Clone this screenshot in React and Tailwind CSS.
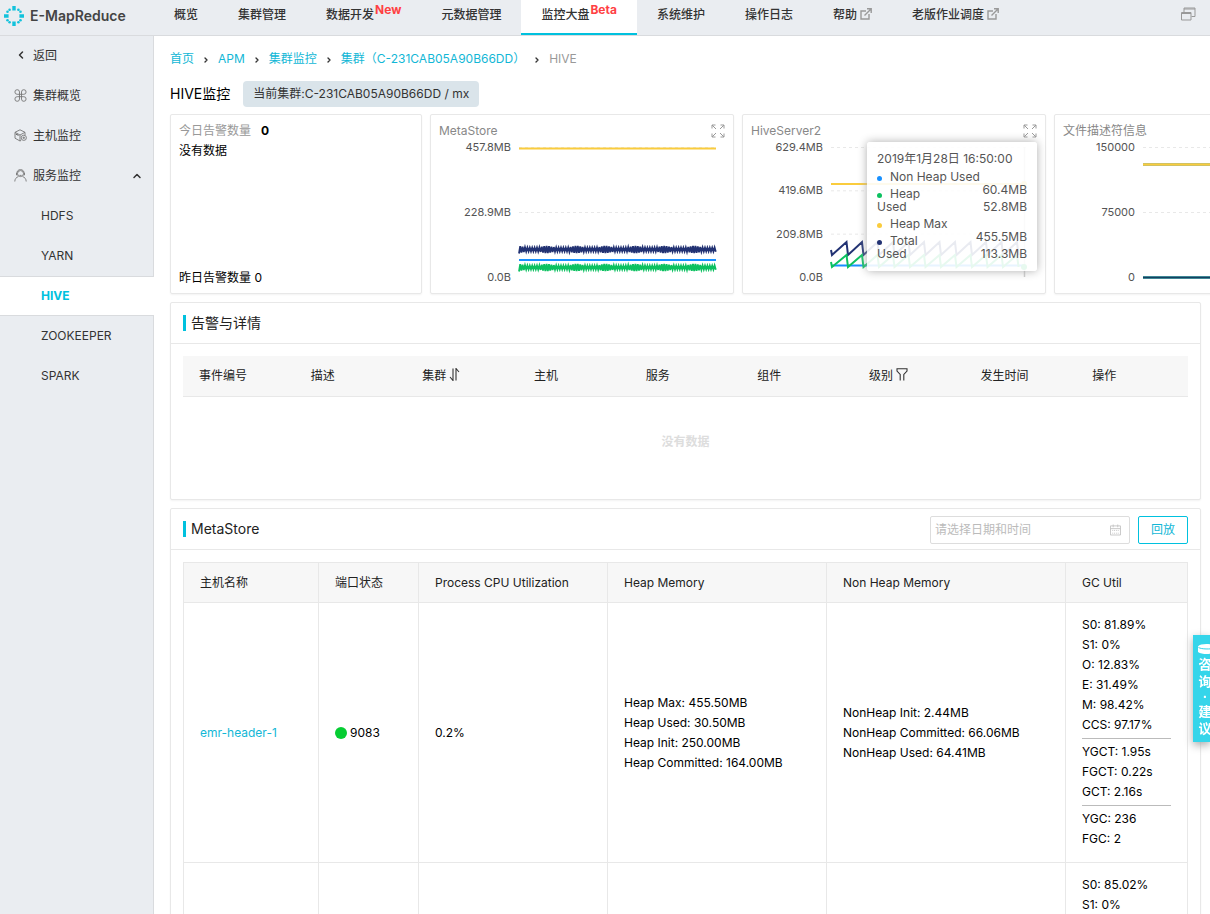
import React, { useState } from "react";
import { ChevronLeft, ChevronRight, ChevronUp } from "lucide-react";

const GREEN = "#0cc160";
const NAVY = "#223273";
const BLUE = "#1890ff";
const YELLOW = "#facc3d";

const navItems = [
  { label: "概览" },
  { label: "集群管理" },
  { label: "数据开发", tag: "New" },
  { label: "元数据管理" },
  { label: "监控大盘", tag: "Beta", active: true },
  { label: "系统维护" },
  { label: "操作日志" },
  { label: "帮助", external: true },
  { label: "老版作业调度", external: true },
];

const services = ["HDFS", "YARN", "HIVE", "ZOOKEEPER", "SPARK"];

const crumbs = ["首页", "APM", "集群监控", "集群（C-231CAB05A90B66DD）"];

const hosts = [
  {
    id: 1,
    name: "emr-header-1",
    port: "9083",
    cpu: "0.2%",
    heap: ["Heap Max: 455.50MB", "Heap Used: 30.50MB", "Heap Init: 250.00MB", "Heap Committed: 164.00MB"],
    nonHeap: ["NonHeap Init: 2.44MB", "NonHeap Committed: 66.06MB", "NonHeap Used: 64.41MB"],
    gc: [
      ["S0: 81.89%", "S1: 0%", "O: 12.83%", "E: 31.49%", "M: 98.42%", "CCS: 97.17%"],
      ["YGCT: 1.95s", "FGCT: 0.22s", "GCT: 2.16s"],
      ["YGC: 236", "FGC: 2"],
    ],
  },
  {
    id: 2,
    heap: [],
    nonHeap: [],
    gc: [["S0: 85.02%", "S1: 0%"]],
  },
];

/* ---------- icons ---------- */

const Logo = () => (
  <svg width="20" height="20" viewBox="0 0 20 20" fill="#12c2dc" aria-hidden="true">
    <path d="M8.300 0h3.400v4.600H8.300zM8.300 15.400h3.400V20H8.300zM0 8.300h4.600v3.400H0zM15.400 8.300H20v3.400h-4.600z" />
    <circle cx="5.600" cy="3.700" r="1.300" />
    <circle cx="14.400" cy="3.700" r="1.300" />
    <circle cx="5.600" cy="16.300" r="1.300" />
    <circle cx="14.400" cy="16.300" r="1.300" />
    <circle cx="3.500" cy="5.800" r="1.300" />
    <circle cx="16.500" cy="5.800" r="1.300" />
    <circle cx="3.500" cy="14.200" r="1.300" />
    <circle cx="16.500" cy="14.200" r="1.300" />
  </svg>
);

const ExternalIcon = () => (
  <svg width="12" height="12" viewBox="0 0 12 12" fill="none" stroke="#999" strokeWidth="1.400" aria-hidden="true">
    <path d="M6 3H1v8h8V6M4.500 7.500L10.500 1.500M7 .8h4.200V5" />
  </svg>
);

const WindowsIcon = () => (
  <svg width="15" height="14" viewBox="0 0 15 14" fill="none" stroke="#999" aria-hidden="true">
    <path d="M3 6V1h11v8.500h-3.500M3 2h11" />
    <path d="M.5 5.500h9.500v7.500H.5zM.5 6.500h9.500" />
  </svg>
);

const CloverIcon = () => (
  <svg width="13" height="13" viewBox="0 0 13 13" fill="none" stroke="#777" strokeWidth=".9" aria-hidden="true">
    <path d="M5.300 5.300H3.200a2.300 2.300 0 1 1 2.300-2.300v7a2.300 2.300 0 1 1-2.300-2.300h6.600A2.300 2.300 0 1 1 7.500 10V3a2.300 2.300 0 1 1 2.300 2.300z" />
  </svg>
);

const HostIcon = () => (
  <svg width="13" height="13" viewBox="0 0 13 13" fill="none" stroke="#777" strokeWidth=".9" aria-hidden="true">
    <path d="M6 .8L1 3.300v5.900l5 2.800 1.200-.6M1 3.300L6 6l5-2.700L6 .8M6 6v6M11 3.300V6" />
    <path stroke="#444" d="M1.800 5l2.700 1.400" />
    <circle cx="9.800" cy="8.800" r="2.600" />
    <path d="M9.800 7.500v2.600M8.500 8.800h2.600" />
  </svg>
);

const ServiceIcon = () => (
  <svg width="13" height="13" viewBox="0 0 13 13" fill="none" stroke="#777" strokeWidth=".9" aria-hidden="true">
    <circle cx="6.500" cy="4.600" r="3" />
    <path d="M2.800 4.800C2.600 2.200 4.300.6 6.500.6s3.900 1.600 3.700 4.200M2.500 4v2h1M10.500 4v2h-1M.8 12.500c0-2.500 1.500-4.300 3.600-4.900M12.200 12.500c0-2.500-1.500-4.300-3.600-4.900M5.500 6.400h2" />
  </svg>
);

const ExpandIcon = () => (
  <svg width="14" height="14" viewBox="0 0 14 14" fill="none" stroke="#999" aria-hidden="true">
    <path d="M1 4.500V1h3.500M1 1l4 4M9.500 1H13v3.500M13 1L9 5M1 9.500V13h3.500M1 13l4-4M9.500 13H13V9.500M13 13L9 9" />
  </svg>
);

const SortIcon = () => (
  <svg width="11" height="13" viewBox="0 0 11 13" fill="none" stroke="#333" strokeWidth="1.100" aria-hidden="true">
    <path d="M4 .5v12L1 9M7 12.500V.5L10 4" />
  </svg>
);

const FilterIcon = () => (
  <svg width="12" height="13" viewBox="0 0 12 13" fill="none" stroke="#333" strokeWidth="1.100" aria-hidden="true">
    <path d="M4.200 12.500V6.500L1 3V.7h10V3L7.800 6.500v6" />
  </svg>
);

const CalendarIcon = () => (
  <svg width="12" height="12" viewBox="0 0 12 12" fill="none" stroke="#c4c4c4" aria-hidden="true">
    <path d="M.5 1.500h11v10H.5zM.5 4.500h11M3.500 0v3M8.500 0v3" />
    <path strokeDasharray="1 1" d="M2.500 6.500h7M2.500 9.500h7" />
  </svg>
);

/* ---------- charts ---------- */

// high-frequency zigzag whose height swells every ~29px
const ripple = (mid) => {
  const pts = [`0,${mid + 4}`];
  for (let i = 1; i < 165; i++) {
    const x = i * 1.2;
    const swell = Math.pow(Math.cos((Math.PI * (x - 28)) / 29.4), 4);
    const amp = 1.8 + 1.8 * swell;
    pts.push(`${x.toFixed(1)},${(mid + (i % 2 ? -amp : amp)).toFixed(1)}`);
  }
  return pts.join(" ");
};

const sawtooth = (top, bottom) => {
  const pts = [`0,${bottom - 5}`, `1,${bottom}`];
  for (let x = 1; x < 185; x += 15.5) {
    pts.push(`${x + 14.5},${top}`, `${x + 16},${bottom}`);
  }
  return pts.join(" ");
};

const GridLine = ({ y }) => <line x1="0" x2="197" y1={y} y2={y} stroke="#e8e8e8" strokeDasharray="3 3" />;

const Chart = ({ ticks, children }) => (
  <div className="flex h-36 gap-2">
    <div className="flex w-20 flex-col justify-between text-right text-[11px] leading-[14px] text-[#545454]">
      {ticks.map((t) => (
        <span key={t}>{t}</span>
      ))}
    </div>
    <svg className="h-36 w-[198px] overflow-visible" viewBox="0 0 198 144" fill="none">
      {ticks.slice(0, -1).map((t, i) => (
        <GridLine key={t} y={7.5 + (130 * i) / (ticks.length - 1)} />
      ))}
      {children}
    </svg>
  </div>
);

const ChartCard = ({ title, ticks, children, overlay }) => (
  <section className="relative h-[180px] w-[304px] shrink-0 rounded-xs border border-[#e8e8e8] bg-white pt-[6px] shadow-xs">
    <div className="flex h-[19px] items-center justify-between px-2">
      <h2 className="text-xs leading-[19px] text-[#888]">{title}</h2>
      <button type="button" aria-label={`${title} 全屏`}>
        <ExpandIcon />
      </button>
    </div>
    <Chart ticks={ticks}>{children}</Chart>
    {overlay}
  </section>
);

const TipLabel = ({ dot, children }) => (
  <div className="flex items-center gap-2 leading-[17px]">
    <span className={`mt-1 size-[5px] shrink-0 rounded-full ${dot}`} />
    {children}
  </div>
);

const ChartTooltip = () => (
  <div className="absolute top-[27px] left-[124px] w-[170px] rounded-[3px] bg-white/90 px-[10px] pt-2 pb-[9px] text-xs text-[#555] shadow-[0_0_10px_#aeaeae]">
    <div className="pb-px leading-[17px] whitespace-nowrap">2019年1月28日 16:50:00</div>
    <div className="flex justify-between">
      <div className="w-16 whitespace-nowrap">
        <TipLabel dot="bg-[#1890ff]">Non Heap Used</TipLabel>
        <TipLabel dot="bg-[#0cc160]">Heap</TipLabel>
        <div className="-mt-0.5 pb-0.5 leading-[13px]">Used</div>
        <TipLabel dot="bg-[#facc3d]">Heap Max</TipLabel>
        <TipLabel dot="bg-[#223273]">Total</TipLabel>
        <div className="-mt-0.5 leading-[13px]">Used</div>
      </div>
      <div className="flex flex-col gap-[13px] pt-[13px] text-right leading-[17px]">
        <div>
          <div>60.4MB</div>
          <div>52.8MB</div>
        </div>
        <div>
          <div>455.5MB</div>
          <div>113.3MB</div>
        </div>
      </div>
    </div>
  </div>
);

/* ---------- page parts ---------- */

const Header = () => (
  <header className="flex h-9 shrink-0 items-start border-b border-[#d9dbde] bg-[#eaedf1]">
    <a href="#home" className="flex h-8 w-[154px] shrink-0 items-center gap-[6px] pl-1 text-sm font-semibold text-[#444]">
      <Logo />
      E-MapReduce
    </a>
    <nav className="flex">
      {navItems.map((item) => (
        <a
          key={item.label}
          href="#nav"
          className={`flex h-[35px] items-start px-5 text-xs leading-[30px] font-medium whitespace-nowrap text-[#333] ${
            item.active ? "border-b-2 border-[#00c1de] bg-white" : ""
          }`}
        >
          {item.label}
          {item.tag && <sup className="top-0 pl-px text-xs leading-5 font-bold text-[#ff4043]">{item.tag}</sup>}
          {item.external && (
            <span className="pt-2 pl-[3px]">
              <ExternalIcon />
            </span>
          )}
        </a>
      ))}
    </nav>
    <button type="button" aria-label="窗口" className="mt-[7px] mr-[14px] ml-auto">
      <WindowsIcon />
    </button>
  </header>
);

const SideItem = ({ icon, children }) => (
  <a href="#side" className="flex h-10 items-center gap-[6px] pl-[14px]">
    <span className="flex w-[13px] justify-center pb-0.5">{icon}</span>
    {children}
  </a>
);

const Sidebar = () => (
  <aside className="w-[154px] shrink-0 border-r border-[#d9dbde] bg-[#eaedf1] text-xs text-[#333]">
    <SideItem icon={<ChevronLeft size={12} strokeWidth={3} />}>返回</SideItem>
    <SideItem icon={<CloverIcon />}>集群概览</SideItem>
    <SideItem icon={<HostIcon />}>主机监控</SideItem>
    <div className="flex items-center justify-between pr-[10px]">
      <SideItem icon={<ServiceIcon />}>服务监控</SideItem>
      <ChevronUp size={12} strokeWidth={3} />
    </div>
    {services.map((name) =>
      name === "HIVE" ? (
        <a
          key={name}
          href="#hive"
          className="-mr-px flex h-10 items-center border-y border-[#d9dbde] bg-white pl-[41px] font-bold text-[#00c1de]"
        >
          {name}
        </a>
      ) : (
        <a key={name} href="#service" className="flex h-10 items-center pl-[41px]">
          {name}
        </a>
      )
    )}
  </aside>
);

const Breadcrumb = () => (
  <nav className="flex h-[21px] items-center gap-2 text-xs whitespace-nowrap">
    {crumbs.map((c) => (
      <React.Fragment key={c}>
        <a href="#crumb" className="text-[#12b7d6]">
          {c}
        </a>
        <ChevronRight size={8} strokeWidth={4} className="mt-0.5 text-[#333]" />
      </React.Fragment>
    ))}
    <span className="text-[#999]">HIVE</span>
  </nav>
);

const Panel = ({ title, actions, children }) => (
  <section className="mt-2 rounded-xs border border-[#e8e8e8] bg-white shadow-xs">
    <div className="flex h-[41px] items-center border-b border-[#e8e8e8] px-3">
      <h2 className="flex grow items-center gap-[5px] text-sm text-[#222]">
        <span className="h-4 w-[3px] bg-[#00c1de]" />
        {title}
      </h2>
      {actions}
    </div>
    <div className="p-3">{children}</div>
  </section>
);

const alertCols = ["事件编号", "描述", "集群", "主机", "服务", "组件", "级别", "发生时间", "操作"];

const AlertTable = () => (
  <table className="w-full table-fixed text-left text-xs">
    <thead>
      <tr className="h-10 border-b border-[#e8e8e8] bg-[#f7f7f7] text-[#222]">
        {alertCols.map((c) => (
          <th key={c} className="pl-4 font-normal">
            <span className="flex items-start gap-[3px]">
              {c}
              {c === "集群" && <SortIcon />}
              {c === "级别" && <FilterIcon />}
            </span>
          </th>
        ))}
      </tr>
    </thead>
    <tbody>
      <tr>
        <td colSpan={9} className="h-[91px] text-center font-bold text-[#ddd]">
          没有数据
        </td>
      </tr>
    </tbody>
  </table>
);

const hostCols = [
  ["主机名称", "w-[135px]"],
  ["端口状态", "w-[100px]"],
  ["Process CPU Utilization", "w-[189px]"],
  ["Heap Memory", "w-[219px]"],
  ["Non Heap Memory", "w-[239px]"],
  ["GC Util", ""],
];

const HostTable = () => (
  <table className="w-full table-fixed border-collapse text-left text-xs leading-5">
    <thead>
      <tr className="h-10 bg-[#f7f7f7] text-[#222]">
        {hostCols.map(([label, width]) => (
          <th key={label} className={`border border-[#e8e8e8] px-4 font-normal ${width}`}>
            {label}
          </th>
        ))}
      </tr>
    </thead>
    <tbody className="text-black">
      {hosts.map((h) => (
        <tr key={h.id}>
          <td className="border border-[#e8e8e8] px-4">
            {h.name && (
              <a href="#host" className="text-[#12b7d6]">
                {h.name}
              </a>
            )}
          </td>
          <td className="border border-[#e8e8e8] px-4">
            {h.port && (
              <span className="flex items-center gap-[3px]">
                <span className="size-3 rounded-full bg-[#06cd33]" />
                {h.port}
              </span>
            )}
          </td>
          <td className="border border-[#e8e8e8] px-4">{h.cpu}</td>
          <td className="border border-[#e8e8e8] px-4">
            {h.heap.map((line) => (
              <div key={line}>{line}</div>
            ))}
          </td>
          <td className="border border-[#e8e8e8] px-4">
            {h.nonHeap.map((line) => (
              <div key={line}>{line}</div>
            ))}
          </td>
          <td className="border border-[#e8e8e8] px-4 pt-3 pb-[13px]">
            {h.gc.map((group, i) => (
              <React.Fragment key={group[0]}>
                {i > 0 && <hr className="my-[3px] border-[#bbb]" />}
                {group.map((line) => (
                  <div key={line}>{line}</div>
                ))}
              </React.Fragment>
            ))}
          </td>
        </tr>
      ))}
    </tbody>
  </table>
);

const FeedbackTab = () => (
  <button
    type="button"
    aria-label="咨询·建议"
    className="fixed top-[635px] right-0 h-[107px] w-[17px] overflow-hidden bg-[#35d5ea] shadow-[0_3px_8px_#aaa]"
  >
    <span className="flex w-6 flex-col items-center pt-[3px] text-[13px] font-bold text-white">
      <svg width="17" height="13" viewBox="0 0 17 13" fill="none" aria-hidden="true">
        <path fill="#fff" d="M1 3.500C3 .5 12 .5 16.500 2v8c-4 1.500-12 1.500-15.500-1z" />
        <path stroke="#35d5ea" d="M1.500 4.500c3 1.800 12 1.800 15.500.8" />
      </svg>
      <span className="leading-[17px]">咨</span>
      <span className="leading-[17px]">询</span>
      <span className="leading-[13px]">·</span>
      <span className="leading-[17px]">建</span>
      <span className="leading-[17px]">议</span>
    </span>
  </button>
);

export default function App() {
  const [date, setDate] = useState("");

  return (
    <div className="flex h-screen flex-col overflow-hidden bg-white [font-family:Inter,'Noto_Sans_CJK_SC',sans-serif]">
      <Header />
      <div className="flex min-h-0 grow">
        <Sidebar />
        <main className="min-w-0 grow overflow-x-hidden overflow-y-auto pt-3 pr-[9px] pb-4 pl-4 [scrollbar-width:none]">
          <Breadcrumb />
          <div className="mt-3 flex items-center gap-[13px]">
            <h1 className="text-sm text-black">HIVE监控</h1>
            <span className="rounded bg-[#dae4ea] px-[10px] text-xs leading-[26px] text-[#333]">
              当前集群:C-231CAB05A90B66DD / mx
            </span>
          </div>

          <div className="mt-[7px] flex gap-2">
            <section className="flex h-[180px] w-[252px] shrink-0 flex-col rounded-xs border border-[#e8e8e8] px-2 pt-[6px] pb-[5px] text-xs leading-5 text-black shadow-xs">
              <div className="flex gap-[10px]">
                <span className="text-[#999]">今日告警数量</span>
                <b>0</b>
              </div>
              <div>没有数据</div>
              <div className="mt-auto">昨日告警数量 0</div>
            </section>

            <ChartCard title="MetaStore" ticks={["457.8MB", "228.9MB", "0.0B"]}>
              <path d="M0 8.500h197" stroke={YELLOW} strokeWidth="2" />
              <polyline points={ripple(109.5)} stroke={NAVY} strokeWidth="1.8" />
              <path d="M0 120h197" stroke={BLUE} strokeWidth="2" />
              <polyline points={ripple(127.5)} stroke={GREEN} strokeWidth="1.8" />
            </ChartCard>

            <ChartCard
              title="HiveServer2"
              ticks={["629.4MB", "419.6MB", "209.8MB", "0.0B"]}
              overlay={<ChartTooltip />}
            >
              <path d="M193.500 7v130" stroke="#ccc" strokeWidth="1.500" />
              <path d="M0 44h193" stroke={YELLOW} strokeWidth="2" />
              <path d="M0 125.500h193" stroke={BLUE} strokeWidth="2" />
              <polyline points={sawtooth(102, 115)} stroke={NAVY} strokeWidth="2" />
              <polyline points={sawtooth(115, 127)} stroke={GREEN} strokeWidth="2" />
              <circle cx="193" cy="44" r="3" fill={YELLOW} />
              <circle cx="193" cy="127" r="3" fill={GREEN} />
            </ChartCard>

            <ChartCard title="文件描述符信息" ticks={["150000", "75000", "0"]}>
              <path d="M0 24.500h197" stroke="#a8b98a" strokeWidth="3" />
              <path d="M0 24.500h197" stroke={YELLOW} strokeWidth="2" />
              <path d="M0 137.500h197" stroke="#3f8795" strokeWidth="3" />
              <path d="M0 137.500h197" stroke="#153f60" strokeWidth="1" />
            </ChartCard>
          </div>

          <Panel title="告警与详情">
            <AlertTable />
          </Panel>

          <Panel
            title="MetaStore"
            actions={
              <div className="flex gap-2 self-end pb-[5px]">
                <label className="flex h-7 w-[200px] items-center rounded-xs border border-[#ddd] pr-2 pl-1">
                  <input
                    type="text"
                    value={date}
                    onChange={(e) => setDate(e.target.value)}
                    placeholder="请选择日期和时间"
                    aria-label="日期和时间"
                    className="min-w-0 grow text-xs text-[#333] outline-none placeholder:text-[#bbb]"
                  />
                  <CalendarIcon />
                </label>
                <button
                  type="button"
                  className="h-7 w-[50px] rounded-xs border border-[#00c1de] text-xs text-[#12b7d6]"
                >
                  回放
                </button>
              </div>
            }
          >
            <HostTable />
          </Panel>
        </main>
      </div>
      <FeedbackTab />
    </div>
  );
}
